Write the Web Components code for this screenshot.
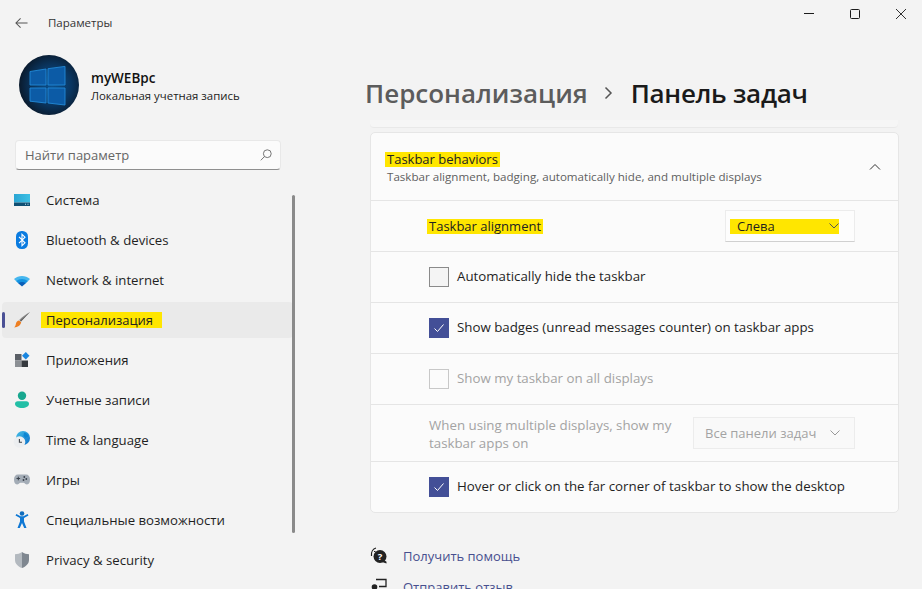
<!DOCTYPE html>
<html lang="ru">
<head>
<meta charset="utf-8">
<title>Параметры</title>
<style>
html, body { margin: 0; height: 100%; overflow: hidden; background: #f3f3f3; }
body { font-family: "Open Sans", "Noto Sans", sans-serif; font-size: 13px; color: #1b1b1b; }
</style>
</head>
<body>
<settings-window>
  <title-bar slot="top">Параметры</title-bar>
  <user-profile slot="side" name="myWEBpc" account="Локальная учетная запись"></user-profile>
  <search-box slot="side" placeholder="Найти параметр"></search-box>
  <side-nav slot="side">
    <nav-item>
      <svg slot="icon" width="18" height="18" viewBox="0 0 18 18"><defs><linearGradient id="g-sys" x1="0" y1="0" x2="1" y2="0"><stop offset="0" stop-color="#2aa5d3"/><stop offset="1" stop-color="#3dc0e4"/></linearGradient></defs><path d="M1 3h16v8.500H1z" fill="url(#g-sys)"/><path d="M1 11.500h16v3.500H1z" fill="#0f4f73"/><path d="M12 12.800h1v1h-1zM14.500 12.800h1v1h-1z" fill="#bfe4f2"/></svg>
      Система
    </nav-item>
    <nav-item>
      <svg slot="icon" width="18" height="18" viewBox="0 0 18 18"><rect x="3" y="0" width="12" height="18" rx="5.500" fill="#0a7be0"/><path d="M6 5.800l6 6-3 2.900V3.300l3 2.900-6 6" fill="none" stroke="#fff" stroke-width="1.100"/></svg>
      Bluetooth &amp; devices
    </nav-item>
    <nav-item>
      <svg slot="icon" width="18" height="18" viewBox="0 0 18 18"><path d="M1 8c4.500-4 11.500-4 16 0l-2.200 2.200H3.200z" fill="#45b6ee"/><path d="M3.200 10.200c3.400-3 8.200-3 11.600 0L12.800 12.300H5.200z" fill="#1492e0"/><path d="M5.200 12.300c2.300-1.900 5.300-1.900 7.600 0L9 15.500z" fill="#0a5fb8"/></svg>
      Network &amp; internet
    </nav-item>
    <nav-item selected>
      <svg slot="icon" width="18" height="18" viewBox="0 0 18 18"><path d="M17 1L8 10.500l-1.800-1.400C9 6 13 3 17 1z" fill="#8a8a8a"/><path d="M17 1L8 10.500l-1-.8z" fill="#5f5f5f"/><path d="M6 9.500l2.200 1.700c-.5 3-3.500 5-7 5.300 1.700-1.500 1.500-3.300 2-4.700C3.600 10.700 4.800 9.800 6 9.500z" fill="#ee7f22"/></svg>
      <hl-mark style="padding:0 9px 0 5px;margin:0 -9px 0 -5px;line-height:16px">Персонализация</hl-mark>
    </nav-item>
    <nav-item>
      <svg slot="icon" width="18" height="18" viewBox="0 0 18 18"><path d="M2 3h6.500v6.500H2z" fill="#5a5f66"/><path d="M2 9.500h6.500V16H2z" fill="#8b8f94"/><path d="M8.500 9.500H15V16H8.500z" fill="#35393e"/><path d="M12.800 1l3.700 3.800-3.700 3.700L9 4.800z" fill="#1a86e0"/></svg>
      Приложения
    </nav-item>
    <nav-item>
      <svg slot="icon" width="18" height="18" viewBox="0 0 18 18"><circle cx="9" cy="4.800" r="4.200" fill="#18a78f"/><path d="M2 12.800c0-1.500 1.100-2.500 2.600-2.500h8.800c1.500 0 2.600 1 2.600 2.500 0 2.700-3 4.200-7 4.200s-7-1.500-7-4.200z" fill="#23bfa6"/></svg>
      Учетные записи
    </nav-item>
    <nav-item>
      <svg slot="icon" width="18" height="18" viewBox="0 0 18 18"><defs><linearGradient id="g-globe" x1="0" y1="0" x2="1" y2="1"><stop offset="0" stop-color="#45c0e8"/><stop offset="1" stop-color="#0b6fc9"/></linearGradient></defs><circle cx="10" cy="7" r="7" fill="url(#g-globe)"/><path d="M11 1.500c2.500.5 3.800 2 4.500 4l-3 1.500-2-2z" fill="#0c86d3"/><circle cx="6.500" cy="11" r="5.800" fill="#eceef0"/><path d="M6.400 8v3.300h2.600" fill="none" stroke="#3f444a" stroke-width="1.100"/></svg>
      Time &amp; language
    </nav-item>
    <nav-item>
      <svg slot="icon" width="18" height="18" viewBox="0 0 18 18"><path d="M5 3.500h8c2.500 0 4 2 4 5 0 2.700-1 5-3 5-1.500 0-2.300-1.800-3.500-1.800h-3c-1.200 0-2 1.800-3.500 1.800-2 0-3-2.300-3-5 0-3 1.500-5 4-5z" fill="#a3acb6"/><path d="M3.500 7.500h3.600M5.300 5.700v3.600" stroke="#39404a" stroke-width="1"/><circle cx="11.300" cy="6" r=".9" fill="#39404a"/><circle cx="13.300" cy="8" r=".9" fill="#39404a"/><circle cx="10.500" cy="9" r=".9" fill="#39404a"/></svg>
      Игры
    </nav-item>
    <nav-item>
      <svg slot="icon" width="18" height="18" viewBox="0 0 18 18"><circle cx="9" cy="2.500" r="2.300" fill="#0f6cbd"/><path d="M2.500 4.500L7 7v3.500L4.500 17h2.300L9 12l2.200 5h2.300L11 10.500V7l4.500-2.500-.9-1.500L10.500 5.300h-3L3.400 3z" fill="#0f78d4"/></svg>
      Специальные возможности
    </nav-item>
    <nav-item>
      <svg slot="icon" width="18" height="18" viewBox="0 0 18 18"><path d="M9 1c2.200 1.500 4.500 2.200 7 2.300V9c0 3.800-3 6.500-7 8z" fill="#7f8790"/><path d="M9 1C6.800 2.500 4.500 3.200 2 3.300V9c0 3.800 3 6.500 7 8z" fill="#b3b9bf"/></svg>
      Privacy &amp; security
    </nav-item>
  </side-nav>

  <page-heading slot="main" parent="Персонализация" current="Панель задач"></page-heading>
  <card-sliver slot="main"></card-sliver>
  <settings-card slot="main">
    <card-header slot="header">
      <hl-mark>Taskbar behaviors</hl-mark>
      <span slot="desc">Taskbar alignment, badging, automatically hide, and multiple displays</span>
    </card-header>
    <setting-row>
      <hl-mark>Taskbar alignment</hl-mark>
      <select-box slot="end" marked style="width:130px">Слева</select-box>
    </setting-row>
    <check-row>Automatically hide the taskbar</check-row>
    <check-row checked>Show badges (unread messages counter) on taskbar apps</check-row>
    <check-row disabled>Show my taskbar on all displays</check-row>
    <setting-row disabled tall>
      When using multiple displays, show my<br>taskbar apps on
      <select-box slot="end" disabled style="width:162px">Все панели задач</select-box>
    </setting-row>
    <check-row checked last>Hover or click on the far corner of taskbar to show the desktop</check-row>
  </settings-card>
  <help-links slot="main">
    <help-link>
      <svg slot="icon" width="18" height="18" viewBox="0 0 18 18"><path d="M1.500 9C1 5 3 1.800 6 1" fill="none" stroke="#222" stroke-width="1.200"/><path d="M4 4.500h1.500" stroke="#222" stroke-width="1.200"/><circle cx="10" cy="9.500" r="6.500" fill="#222"/><path d="M12 15l4.500 1.500v-1.800L14 13z" fill="#222"/><text x="10" y="13" font-size="9.500" font-weight="700" text-anchor="middle" fill="#fff" font-family="Open Sans">?</text></svg>
      Получить помощь
    </help-link>
    <help-link>
      <svg slot="icon" width="18" height="18" viewBox="0 0 18 18"><path d="M6 1.500h10v7H9" fill="none" stroke="#222" stroke-width="1.300"/><circle cx="4.500" cy="9" r="2.800" fill="#222"/><path d="M0 17c0-3 1.800-4.500 4.500-4.500S9 14 9 17z" fill="#222"/></svg>
      Отправить отзыв
    </help-link>
  </help-links>
</settings-window>

<script>
function define(name, html, init) {
  customElements.define(name, class extends HTMLElement {
    constructor() {
      super();
      this.attachShadow({ mode: 'open' }).innerHTML = html;
    }
    connectedCallback() {
      if (init) init(this, this.shadowRoot);
    }
  });
}

define('settings-window', `
<style>
:host { display: grid; grid-template-columns: 295px 1fr; grid-template-rows: 45px 1fr; width: 922px; height: 589px; overflow: hidden; }
.top { grid-column: 1 / 3; }
.side { display: flex; flex-direction: column; min-height: 0; }
.main { display: flex; flex-direction: column; padding: 0 23px 0 75px; min-height: 0; overflow: hidden; }
</style>
<div class="top"><slot name="top"></slot></div>
<div class="side"><slot name="side"></slot></div>
<div class="main"><slot name="main"></slot></div>`);

define('title-bar', `
<style>
:host { display: flex; align-items: center; height: 45px; position: relative; font-size: 11.500px; color: #333; }
.back { margin: 0 20px 0 15px; }
.controls { margin-left: auto; display: flex; align-items: center; gap: 34px; padding: 0 15px 18px 0; }
svg { display: block; }
</style>
<svg class="back" width="13" height="12" viewBox="0 0 14 12"><path d="M13.500 6H1.200M6 1L1 6l5 5" fill="none" stroke="#555" stroke-width="1.100"/></svg>
<slot></slot>
<div class="controls">
  <svg width="12" height="12" viewBox="0 0 12 12"><path d="M1 5.500h10" stroke="#1b1b1b" stroke-width="1"/></svg>
  <svg width="12" height="12" viewBox="0 0 12 12"><rect x="1.500" y="1.500" width="9" height="9" rx="1" fill="none" stroke="#1b1b1b" stroke-width="1"/></svg>
  <svg width="12" height="12" viewBox="0 0 12 12"><path d="M1 1l10 10M11 1L1 11" stroke="#1b1b1b" stroke-width=".9"/></svg>
</div>`);

define('user-profile', `
<style>
:host { display: flex; align-items: center; gap: 12px; margin: 10px 0 0 19px; height: 60px; }
svg { display: block; flex: none; }
.text { padding-top: 2px; }
.name { font-size: 13.500px; font-weight: 600; line-height: 18px; color: #111; }
.account { font-size: 11.400px; line-height: 17px; color: #1b1b1b; }
</style>
<svg width="60" height="60" viewBox="0 0 60 60">
  <defs><radialGradient id="g-av" cx=".55" cy=".5" r=".55"><stop offset="0" stop-color="#0b5290"/><stop offset=".6" stop-color="#0a355f"/><stop offset="1" stop-color="#0a1a2c"/></radialGradient></defs>
  <circle cx="30" cy="30" r="30" fill="url(#g-av)"/>
  <g fill="#0c5ba6" stroke="#2289d6" stroke-width=".9">
    <path d="M11 16.500l16-2.500v16H11z"/><path d="M29 13.700l17-2.300v18.600H29z"/>
    <path d="M11 33h16v15l-16-1.800z"/><path d="M29 33h17v17l-17-2z"/>
  </g>
</svg>
<div class="text"><div class="name"></div><div class="account"></div></div>`, (el, root) => {
  root.querySelector('.name').textContent = el.getAttribute('name');
  root.querySelector('.account').textContent = el.getAttribute('account');
});

define('search-box', `
<style>
:host { display: flex; align-items: center; justify-content: space-between; box-sizing: border-box; width: 266px; height: 30px; margin: 25px 0 0 15px; padding: 0 8px 0 9px; background: #fbfbfb; border: 1px solid #e8e8e8; border-bottom: 1px solid #8f8f8f; border-radius: 4px; font-size: 13px; color: #666; }
</style>
<span></span>
<svg width="12" height="12" viewBox="0 0 12 12"><circle cx="7.300" cy="4.700" r="3.900" fill="none" stroke="#666" stroke-width=".9"/><path d="M4.500 7.500L.8 11.300" stroke="#666" stroke-width=".9"/></svg>`, (el, root) => {
  root.querySelector('span').textContent = el.getAttribute('placeholder');
});

define('side-nav', `
<style>
:host { display: flex; flex-direction: column; gap: 4px; margin-top: 12px; position: relative; }
.scroll { position: absolute; left: 292px; top: 13px; width: 3px; height: 338px; border-radius: 2px; background: #8a8a8a; }
</style>
<slot></slot>
<div class="scroll"></div>`);

define('nav-item', `
<style>
:host { display: flex; align-items: center; height: 36px; margin-left: 2px; width: 291px; position: relative; border-radius: 4px; font-size: 13.200px; color: #1f1f1f; flex: none; }
:host([selected]) { background: #eaeaea; }
:host([selected])::before { content: ""; position: absolute; left: 0; top: 10px; width: 3px; height: 16px; border-radius: 2px; background: #4a5095; }
.icon { display: flex; width: 18px; height: 18px; margin: 0 15px 0 11px; flex: none; }
</style>
<div class="icon"><slot name="icon"></slot></div>
<div><slot></slot></div>`);

define('hl-mark', `
<style>
:host { display: inline-block; background: #ffe600; padding: 0 2px; margin: 0 -2px; font-size: 13px; line-height: 15px; color: #222; }
</style>
<slot></slot>`);

define('page-heading', `
<style>
:host { display: flex; align-items: center; height: 40px; margin: 28px 0 0 -5px; font-size: 26px; font-weight: 600; color: #1a1a1a; flex: none; }
.parent { color: #5c5c5c; }
.current { letter-spacing: -.3px; }
svg { margin: 0 18px 0 16px; }
</style>
<span class="parent"></span>
<svg width="9" height="14" viewBox="0 0 9 14"><path d="M1.500 1.500L7 7l-5.500 5.500" fill="none" stroke="#555" stroke-width="1.500"/></svg>
<span class="current"></span>`, (el, root) => {
  root.querySelector('.parent').textContent = el.getAttribute('parent');
  root.querySelector('.current').textContent = el.getAttribute('current');
});

define('card-sliver', `
<style>
:host { display: block; height: 7px; margin: 7px 1px 4px 0; background: #f6f6f6; border-bottom: 1px solid #e9e9e9; border-radius: 0 0 4px 4px; flex: none; }
</style>`);

define('settings-card', `
<style>
:host { display: block; box-sizing: border-box; background: #fbfbfb; border: 1px solid #e6e6e6; border-radius: 5px; height: 381px; flex: none; }
</style>
<slot name="header"></slot>
<slot></slot>`);

define('card-header', `
<style>
:host { display: flex; align-items: center; justify-content: space-between; box-sizing: border-box; height: 68px; padding: 2px 17px 0 16px; border-bottom: 1px solid #e5e5e5; font-size: 13px; }
.title { line-height: 17px; }
.desc { font-size: 11.600px; line-height: 16px; margin-top: 1px; color: #5f5f5f; }
svg { display: block; margin-top: -2px; }
</style>
<div><div class="title"><slot></slot></div><div class="desc"><slot name="desc"></slot></div></div>
<svg width="12" height="8" viewBox="0 0 12 8"><path d="M1 6.500L6 1.500l5 5" fill="none" stroke="#333" stroke-width="1"/></svg>`);

define('setting-row', `
<style>
:host { display: flex; align-items: center; justify-content: space-between; box-sizing: border-box; height: 51px; padding: 0 43px 0 58px; border-bottom: 1px solid #e5e5e5; font-size: 13.300px; line-height: 18px; color: #1f1f1f; }
:host([tall]) { height: 57px; }
:host([disabled]) { color: #a3a3a3; }
:host([tall]) .label { padding-top: 2px; }
</style>
<div class="label"><slot></slot></div>
<slot name="end"></slot>`);

define('check-row', `
<style>
:host { display: flex; align-items: center; gap: 8px; box-sizing: border-box; height: 51px; padding: 0 43px 0 58px; border-bottom: 1px solid #e5e5e5; font-size: 13.300px; color: #1f1f1f; }
:host([last]) { border-bottom: 0; padding-bottom: 2px; }
:host([disabled]) { color: #a3a3a3; }
.box { box-sizing: border-box; width: 20px; height: 20px; background: #f4f4f4; border: 1px solid #8a8a8a; display: flex; align-items: center; justify-content: center; flex: none; }
:host([checked]) .box { background: #434f97; border-color: #434f97; }
:host([disabled]) .box { background: #fbfbfb; border-color: #c8c8c8; }
.label { margin-top: -2px; }
svg { display: none; }
:host([checked]) svg { display: block; }
</style>
<div class="box"><svg width="12" height="10" viewBox="0 0 12 10"><path d="M1.500 5.500L4.500 8.500 10.500 1.500" fill="none" stroke="#fff" stroke-width="1"/></svg></div>
<div class="label"><slot></slot></div>`);

define('select-box', `
<style>
:host { display: flex; align-items: center; box-sizing: border-box; height: 32px; padding: 0 4px; background: #fdfdfd; border: 1px solid #ececec; border-bottom-color: #d0d0d0; font-size: 13px; color: #1f1f1f; flex: none; }
.inner { display: flex; align-items: center; justify-content: space-between; flex: 1; height: 15px; padding: 0 0 0 7px; }
.inner.wide { padding: 0 10px 0 7px; }
:host([marked]) .inner { background: #ffe600; margin-right: 11px; }
:host([disabled]) { background: #f9f9f9; border-color: #ececec; color: #a3a3a3; }
svg { display: block; }
</style>
<div class="inner"><span><slot></slot></span>
<svg width="10" height="6" viewBox="0 0 10 6"><path d="M.5.500L5 5 9.500.5" fill="none" stroke="#555" stroke-width="1"/></svg></div>`, (el, root) => {
  if (el.hasAttribute('disabled')) {
    root.querySelector('.inner').classList.add('wide');
    root.querySelector('svg').querySelector('path').setAttribute('stroke', '#999');
  }
});

define('help-links', `
<style>
:host { display: flex; flex-direction: column; gap: 13px; margin-top: 34px; flex: none; }
</style>
<slot></slot>`);

define('help-link', `
<style>
:host { display: flex; align-items: center; height: 18px; font-size: 13px; color: #474f8f; }
.icon { display: flex; width: 18px; height: 18px; margin-right: 15px; flex: none; }
</style>
<div class="icon"><slot name="icon"></slot></div>
<div><slot></slot></div>`);
</script>
</body>
</html>
